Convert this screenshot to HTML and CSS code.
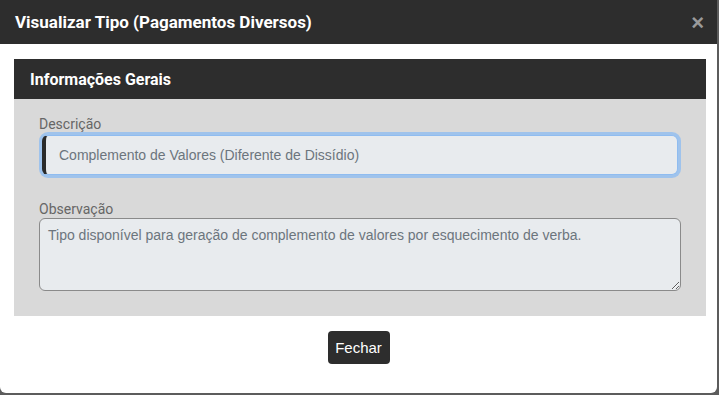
FILE: index.html
```html
<!DOCTYPE html>
<html lang="pt-BR">
  <head>
    <title>Visualizar Tipo</title>
    <meta charset="utf-8" />
    <link rel="stylesheet" href="styles.css">
  </head>
  <body>
    <div class="modal">
      <div class="modal-header">
        <h4 class="modal-title">Visualizar Tipo (Pagamentos Diversos)</h4>
        <button type="button" class="close">&times;</button>
      </div>
      <div class="modal-body">
        <div class="panel">
          <div class="panel-heading">Informações Gerais</div>
          <div class="panel-body">
            <div class="form-group">
              <label for="descricao">Descrição</label>
              <input type="text" id="descricao" class="form-control focused" value="Complemento de Valores (Diferente de Dissídio)" readonly />
            </div>
            <div class="form-group">
              <label for="observacao">Observação</label>
              <textarea id="observacao" class="form-control" readonly>Tipo disponível para geração de complemento de valores por esquecimento de verba.</textarea>
            </div>
          </div>
        </div>
      </div>
      <div class="modal-footer">
        <button type="button" class="btn-close">Fechar</button>
      </div>
    </div>
  </body>
</html>
```

FILE: styles.css
```css
html, body {
  margin: 0;
  height: 100%;
}

body {
  background: #5c5c5c;
  font-family: Roboto, "Liberation Sans", sans-serif;
}

.modal {
  width: 717px;
  height: 393px;
  background: #fff;
  border-radius: 0 0 6px 6px;
  display: flex;
  flex-direction: column;
  overflow: hidden;
}

.modal-header {
  height: 44px;
  background: #2d2d2d;
  display: flex;
  align-items: center;
  justify-content: space-between;
  padding: 0 13px 0 15px;
}

.modal-title {
  margin: 0;
  color: #fff;
  font-size: 17px;
  font-weight: bold;
}

.close {
  border: none;
  background: none;
  color: #9a9a9a;
  font-family: "Liberation Sans", Arial, sans-serif;
  font-size: 22px;
  font-weight: bold;
  padding: 0;
  margin-top: 2px;
  line-height: 1;
}

.modal-body {
  padding: 15px 11px 0 14px;
}

.panel-heading {
  height: 40px;
  background: #2d2d2d;
  color: #fff;
  font-size: 16px;
  font-weight: bold;
  display: flex;
  align-items: center;
  padding-left: 16px;
}

.panel-body {
  background: #d9d9d9;
  padding: 17px 25px 25px 25px;
}

.form-group {
  display: flex;
  flex-direction: column;
}

.form-group + .form-group {
  margin-top: 26px;
}

label {
  color: #666;
  font-size: 14px;
  line-height: 16px;
  margin-bottom: 1px;
}

.form-control {
  box-sizing: border-box;
  background: #e8ebee;
  color: #6c757d;
  font-family: "Liberation Sans", Arial, sans-serif;
  font-size: 14px;
  border: 1px solid #8a8a8a;
  border-radius: 6px;
  outline: none;
}

input.form-control {
  height: 40px;
  margin: 2px 3px 0 3px;
  padding: 0 12px 0 13px;
}

.focused {
  border: 1px solid #8fbcf0;
  border-left: 4px solid #2a2a2a;
  box-shadow: 0 0 0 3px #9fc3ec;
}

textarea.form-control {
  height: 73px;
  padding: 6px 8px;
  line-height: 20px;
  resize: vertical;
}

.modal-footer {
  display: flex;
  justify-content: center;
  padding-top: 15px;
}

.btn-close {
  width: 62px;
  height: 33px;
  border: none;
  border-radius: 4px;
  background: #2d2d2d;
  color: #fff;
  font-family: "Liberation Sans", Arial, sans-serif;
  font-size: 15px;
}
```
